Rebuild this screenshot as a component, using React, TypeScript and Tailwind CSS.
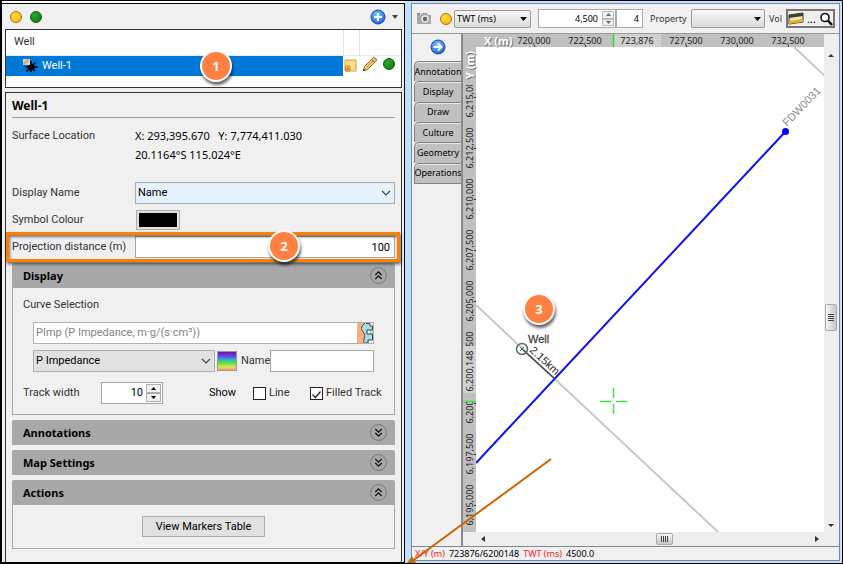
import React, { useState } from 'react'

type SectionProps = {
    title: string
    open?: boolean
    children?: React.ReactNode
}

const xTicks = [
    { x: 71, label: '720,000' },
    { x: 122, label: '722,500' },
    { x: 223, label: '727,500' },
    { x: 274, label: '730,000' },
    { x: 325, label: '732,500' },
]

const yTicks = [
    { y: 63, label: '6,215,000' },
    { y: 114, label: '6,212,500' },
    { y: 165, label: '6,210,000' },
    { y: 216, label: '6,207,500' },
    { y: 267, label: '6,205,000' },
    { y: 318, label: '6,202,500' },
    { y: 369, label: '6,200,000' },
    { y: 420, label: '6,197,500' },
    { y: 471, label: '6,195,000' },
]

const tabs = ['Annotation', 'Display', 'Draw', 'Culture', 'Geometry', 'Operations']

const Dot = ({ color }: { color: 'yellow' | 'green' }) => (
    <span
        className={`block w-3 h-3 rounded-full border shrink-0 ${color === 'yellow'
            ? 'bg-[radial-gradient(circle_at_35%_35%,#ffe040,#ffb000)] border-[#b06a10]'
            : 'bg-[radial-gradient(circle_at_35%_35%,#30a830,#007800)] border-[#1c5a1c]'
            }`}
    />
)

const Badge = ({ n, className }: { n: number; className: string }) => (
    <span
        className={`absolute z-10 flex items-center justify-center w-8 h-8 rounded-full border-2 border-white bg-[#ff8040] text-white font-['Noto_Sans',sans-serif] text-[13px] font-bold shadow-[1px_3px_3px_rgba(0,0,0,0.6)] ${className}`}
    >
        {n}
    </span>
)

const Chevron = () => (
    <svg className="absolute right-1 top-2 pointer-events-none" width="10" height="6" viewBox="0 0 10 6">
        <path d="M1 1l4 4 4-4" fill="none" stroke="#444" strokeWidth="1.2" />
    </svg>
)

const BlueCircle = ({ children }: { children: React.ReactNode }) => (
    <svg width="16" height="16" viewBox="0 0 16 16">
        <defs>
            <radialGradient id="blueball" cx="0.45" cy="0.35" r="0.7">
                <stop offset="0" stopColor="#8cc4ff" />
                <stop offset="0.6" stopColor="#3f8af0" />
                <stop offset="1" stopColor="#1d4fc0" />
            </radialGradient>
        </defs>
        <circle cx="8" cy="8" r="7" fill="url(#blueball)" stroke="#1c49a8" />
        {children}
    </svg>
)

const Section = ({ title, open = false, children }: SectionProps) => (
    <section>
        <h2 className="flex items-center justify-between h-[25px] pl-[11px] pr-2 rounded-t-[2px] bg-[#a8a8a8] font-['Noto_Sans',sans-serif] font-bold text-black">
            {title}
            <button type="button" aria-label={`Toggle ${title}`}>
                <svg width="17" height="17" viewBox="0 0 17 17" fill="none">
                    <circle cx="8.5" cy="8.5" r="7.9" stroke="#777" />
                    {open
                        ? <path d="M5.3 8L8.5 4.8 11.7 8M5.3 12L8.5 8.8 11.7 12" stroke="#111" strokeWidth="1.3" />
                        : <path d="M5.3 5L8.5 8.2 11.7 5M5.3 9L8.5 12.2 11.7 9" stroke="#111" strokeWidth="1.3" />}
                </svg>
            </button>
        </h2>
        {open && <div className="border border-t-0 border-[#a8a8a8]">{children}</div>}
    </section>
)

const Check = ({ id, label, defaultChecked = false }: { id: string; label: string; defaultChecked?: boolean }) => {
    const [on, setOn] = useState(defaultChecked)
    return (
        <span className="relative flex items-center gap-[3px]">
            <input
                id={id}
                type="checkbox"
                checked={on}
                onChange={() => setOn(!on)}
                className="appearance-none w-[13px] h-[13px] border border-[#222] bg-white"
            />
            {on && (
                <svg className="absolute left-0 top-0.5 pointer-events-none" width="13" height="13" viewBox="0 0 13 13">
                    <path d="M2.5 6.5l3 3 5-6" fill="none" stroke="#222" strokeWidth="1.3" />
                </svg>
            )}
            <label htmlFor={id}>{label}</label>
        </span>
    )
}

const WellTree = () => (
    <div className="relative h-[59px] border border-[#333] bg-white">
        <table className="w-full border-collapse table-fixed">
            <colgroup>
                <col />
                <col className="w-4" />
                <col className="w-[42px]" />
            </colgroup>
            <tbody>
                <tr className="h-[25px] border-b border-[#e8e8e8]">
                    <td className="pl-2">Well</td>
                    <td className="border-x border-[#e4e4e4]" />
                    <td />
                </tr>
                <tr className="h-[21px]">
                    <td className="bg-[#0078d7] text-white">
                        <span className="flex items-center gap-1 pl-4">
                            <svg width="16" height="16" viewBox="0 0 16 16">
                                <path d="M9 3v11M3.5 9h12M5 5l8 8M13.5 4.5L4.5 13.5" stroke="#000" strokeWidth="1.4" />
                                <circle cx="9" cy="9" r="3.6" />
                                <path d="M1 1h7v6H1z" fill="#c5d5dc" />
                                <path d="M2 6l4-4" stroke="#e0a040" strokeWidth="2" />
                            </svg>
                            Well-1
                        </span>
                    </td>
                    <td>
                        <svg className="ml-px" width="13" height="13" viewBox="0 0 13 13">
                            <path d="M1 1h11v11H1z" fill="#ffe08a" stroke="#e09a2c" />
                            <path d="M1.5 7H6v5H1.5z" fill="#f7c95c" stroke="#d08a24" />
                            <path d="M3 9l2 2M3 11V9h2" stroke="#b87418" fill="none" />
                        </svg>
                    </td>
                    <td className="align-top">
                        <span className="flex items-center gap-[5px] pl-[3px]">
                            <svg width="16" height="16" viewBox="0 0 16 16">
                                <path d="M1.5 14.5l1-4L11 2l3 3-8.5 8.5z" fill="#f8cf6b" stroke="#8a6420" />
                                <path d="M9.5 3.5l3 3L14.8 4 12 1.2z" fill="#f3b9a0" stroke="#8a6420" />
                                <path d="M4 12l7-7" stroke="#c98f2c" />
                                <path d="M1 15l.8-2.3 1.6 1.5z" fill="#222" />
                            </svg>
                            <Dot color="green" />
                        </span>
                    </td>
                </tr>
            </tbody>
        </table>
        <Badge n={1} className="left-[194px] top-5" />
    </div>
)

const WellProperties = () => (
    <div className="flex-1 mt-1 px-[6px] border border-b-0 border-[#333]">
        <h1 className="h-[25px] leading-[25px] border-b border-[#a0a0a0] font-['Noto_Sans',sans-serif] text-[12px] font-bold text-black">Well-1</h1>
        <div className="grid grid-cols-[123px_1fr] mt-2 leading-[19px]">
            <span>Surface Location</span>
            <span className="text-black font-['Noto_Sans',sans-serif]">
                X: 293,395.670&nbsp;&nbsp; Y: 7,774,411.030
                <br />
                20.1164°S 115.024°E
            </span>
        </div>
        <div className="grid grid-cols-[123px_1fr] items-center gap-y-[6px] mt-[18px]">
            <label htmlFor="displayName">Display Name</label>
            <span className="relative">
                <select id="displayName" className="block appearance-none w-full h-[22px] px-0.5 border border-[#a5acb5] bg-[#e5f1fb] text-black">
                    <option>Name</option>
                </select>
                <Chevron />
            </span>
            <span>Symbol Colour</span>
            <button type="button" aria-label="Symbol Colour" className="w-11 h-5 ml-px p-0.5 border border-[#adadad] bg-[#e1e1e1]">
                <span className="block h-full bg-black" />
            </button>
        </div>
        <div className="relative grid grid-cols-[123px_1fr] items-center mt-[6px]">
            <label htmlFor="projection">Projection distance (m)</label>
            <input id="projection" defaultValue="100" className="h-[22px] w-full px-1 border border-[#a5a5a5] bg-white text-right text-black" />
            <span className="absolute -left-[6px] -right-[5px] -inset-y-1 border-[3px] border-[#ff8000] shadow-[1px_2px_3px_rgba(0,0,0,0.6),inset_1px_2px_3px_rgba(0,0,0,0.5)] pointer-events-none" />
            <Badge n={2} className="left-64 -top-[6px]" />
        </div>
        <div className="flex flex-col gap-[5px] mt-[5px]">
            <Section title="Display" open>
                <div className="pl-[10px] pt-[9px] pb-[10px]">
                    <div className="leading-4">Curve Selection</div>
                    <div className="ml-[10px] mr-5 mt-[9px] flex h-[22px] border border-[#b0b0b0] bg-white">
                        <input
                            aria-label="Curve Selection"
                            defaultValue="PImp (P Impedance, m·g/(s·cm³))"
                            className="flex-1 min-w-0 px-0.5 text-[#838383]"
                        />
                        <svg width="16" height="20" viewBox="0 0 16 20">
                            <path d="M0 0h16v20H0z" fill="#ffad7a" />
                            <path d="M7 0C3 4 4 7 7 10c2 3-1 7 0 10h9V0z" fill="#a6dbe8" />
                            <path d="M13 0h3v3h-3zM10.500 7H13v4h-2.500zM12 17h4v3h-4z" fill="#f0f0f0" />
                            <path d="M8 0C3 4 4 7 7 10c2 3-1 7 0 10M9 .5h4v2.500h2.500v4H10v4h5.500v6H11v3H8" fill="none" stroke="#444" />
                        </svg>
                    </div>
                    <div className="ml-[10px] mr-5 mt-[6px] flex items-center">
                        <span className="relative w-[182px]">
                            <select aria-label="Curve type" className="block appearance-none w-full h-[22px] px-0.5 border border-[#adadad] bg-[#e1e1e1] text-black">
                                <option>P Impedance</option>
                            </select>
                            <Chevron />
                        </span>
                        <button
                            type="button"
                            aria-label="Colour map"
                            className="w-5 h-5 ml-0.5 border border-[#999] bg-[linear-gradient(#7a0aa0,#5a50f0_25%,#30c0b0_45%,#60e040_62%,#e0e060_82%,#ffa060)]"
                        />
                        <label htmlFor="curveName" className="w-[33px] pl-1">Name</label>
                        <input id="curveName" className="flex-1 min-w-0 h-[22px] border border-[#a5a5a5] bg-white px-0.5" />
                    </div>
                    <div className="mt-[10px] flex items-center">
                        <label htmlFor="trackWidth" className="w-[78px]">Track width</label>
                        <span className="flex w-[62px] h-[22px] p-px border border-[#a5a5a5] bg-white">
                            <input id="trackWidth" defaultValue="10" className="flex-1 min-w-0 pr-[3px] text-right text-black" />
                            <span className="flex flex-col w-[15px]">
                                <button type="button" aria-label="Increase" className="flex-1 flex items-center justify-center border border-[#adadad] bg-[#f0f0f0]">
                                    <svg width="5" height="3"><path d="M0 3L2.5 0 5 3z" /></svg>
                                </button>
                                <button type="button" aria-label="Decrease" className="flex-1 flex items-center justify-center border border-[#adadad] bg-[#f0f0f0]">
                                    <svg width="5" height="3"><path d="M0 0l2.5 3L5 0z" /></svg>
                                </button>
                            </span>
                        </span>
                        <span className="w-[90px] pl-[46px] text-black">Show</span>
                        <span className="w-[57px]"><Check id="line" label="Line" /></span>
                        <Check id="filled" label="Filled Track" defaultChecked />
                    </div>
                </div>
            </Section>
            <Section title="Annotations" />
            <Section title="Map Settings" />
            <Section title="Actions" open>
                <div className="flex justify-center pt-[11px] pb-[11px]">
                    <button type="button" className="w-[123px] h-[21px] border border-[#adadad] bg-[#e1e1e1] text-black">
                        View Markers Table
                    </button>
                </div>
            </Section>
        </div>
    </div>
)

const MapToolbar = () => (
    <div className="flex items-center h-[30px] border-b border-[#9a9a9a] pl-1 pr-1">
        <svg width="16" height="14" viewBox="0 0 16 14">
            <path d="M1 3h4l1-2h5l1 2h3v9H1z" fill="#a5a5a5" />
            <path d="M1 1h3v2H1z" fill="#8a8a8a" />
            <circle cx="9" cy="7" r="3.8" fill="#e8e8e8" />
            <circle cx="9" cy="7" r="2.2" fill="#666" />
        </svg>
        <span className="ml-2"><Dot color="yellow" /></span>
        <span className="relative ml-[2px] w-[77px]">
            <select aria-label="Domain" className="block appearance-none w-full h-[18px] px-0.5 rounded-[2px] border border-[#999] bg-gradient-to-b from-[#f6f6f6] to-[#dcdcdc] text-black">
                <option>TWT (ms)</option>
            </select>
            <svg className="absolute right-1 top-[7px] pointer-events-none" width="7" height="4"><path d="M0 0h7L3.5 4z" /></svg>
        </span>
        <span className="flex ml-[7px] w-[78px] h-[19px] border border-[#aaa] bg-white">
            <input aria-label="Time" defaultValue="4,500" className="flex-1 min-w-0 pr-[3px] text-right text-black" />
            <span className="flex flex-col w-[14px] p-px">
                <button type="button" aria-label="Time up" className="flex-1 flex items-center justify-center border border-[#bbb] bg-[#f0f0f0]">
                    <svg width="5" height="3"><path d="M0 3L2.5 0 5 3z" fill="#5068a0" /></svg>
                </button>
                <button type="button" aria-label="Time down" className="flex-1 flex items-center justify-center border border-[#bbb] bg-[#f0f0f0]">
                    <svg width="5" height="3"><path d="M0 0l2.5 3L5 0z" fill="#5068a0" /></svg>
                </button>
            </span>
        </span>
        <input aria-label="Step" defaultValue="4" className="w-[27px] h-[19px] pr-[3px] border border-[#aaa] bg-white text-right text-black" />
        <label htmlFor="property" className="ml-[7px] w-[41px]">Property</label>
        <span className="relative flex-1 min-w-0">
            <select id="property" className="block appearance-none w-full h-[19px] rounded-[2px] border border-[#999] bg-gradient-to-b from-[#f6f6f6] to-[#dcdcdc]">
                <option></option>
            </select>
            <svg className="absolute right-1 top-[8px] pointer-events-none" width="7" height="4"><path d="M0 0h7L3.5 4z" /></svg>
        </span>
        <span className="ml-1 w-[17px]">Vol</span>
        <button type="button" aria-label="Select volume" className="flex items-center justify-between w-[49px] h-[19px] border-2 border-[#777] bg-[#eee] text-black">
            <svg width="16" height="13" viewBox="0 0 16 13">
                <path d="M1 3l14-2v9L1 12z" fill="#f2e6c0" stroke="#333" />
                <path d="M1 3l14-2v3L1 6z" fill="#4a3a20" />
                <path d="M1 9l14-2v3L1 12z" fill="#e8b020" />
            </svg>
            <span className="text-[11px]">...</span>
            <svg width="14" height="14" viewBox="0 0 14 14">
                <circle cx="6" cy="5.5" r="4" fill="#fff" stroke="#111" strokeWidth="1.6" />
                <path d="M9 8.5l4 4.5" stroke="#111" strokeWidth="2.6" />
            </svg>
        </button>
    </div>
)

const Plot = () => (
    <svg className="flex-1 min-w-0 bg-white" fontSize="9" fill="#222">
        {/* survey lines */}
        <g fill="none" strokeWidth="2">
            <path d="M331 13l31 29M13 271l242 227" stroke="#c8c8c8" />
            <path d="M322.5 97.5L13 429" stroke="#1010f0" />
        </g>
        <circle cx="322.5" cy="97.5" r="3.5" fill="#0000ff" />
        <text transform="translate(324 93) rotate(-46)" fontSize="11" fill="#8a8a8a" fontFamily="Liberation Sans, sans-serif">FDW0031</text>

        {/* well and its projection */}
        <path d="M59 315l33 30" stroke="#444" strokeWidth="1.5" />
        <circle cx="59" cy="315" r="5.5" fill="none" stroke="#666" strokeWidth="1.5" />
        <path d="M57 317l4-4M57 313l4 4" stroke="#257a7a" />
        <text x="65" y="309" fontSize="11" fill="#444" stroke="#444" strokeWidth="0.3" fontFamily="Liberation Sans, sans-serif">Well</text>
        <text transform="translate(66 317) rotate(43)" fontSize="11" fontFamily="Liberation Sans, sans-serif">2.15km</text>

        {/* cursor */}
        <path d="M137 367.5h11M153 367.5h11M150.5 354v10M150.5 370v10" stroke="#48e048" strokeWidth="1.5" />

        {/* axes */}
        <rect width="100%" height="13" fill="#c0c0c0" />
        <rect width="13" height="100%" fill="#c0c0c0" />
        {yTicks.map((t) => (
            <g key={t.label}>
                <text transform={`translate(10 ${t.y}) rotate(-90)`} textAnchor="middle">{t.label}</text>
                <path d={`M11 ${t.y}.5h2`} stroke="#333" />
            </g>
        ))}
        <rect width="13" height="51" fill="#c0c0c0" />
        <rect y="359" width="13" height="9" fill="#c0c0c0" />
        <rect y="312" width="13" height="47" fill="#d0d0d0" />
        <text transform="translate(10 337) rotate(-90)" textAnchor="middle">6,200,148</text>
        <path d="M0 367.5h13" stroke="#48e048" strokeWidth="1.5" />
        {xTicks.map((t) => (
            <g key={t.label}>
                <text x={t.x} y="10" textAnchor="middle">{t.label}</text>
                <path d={`M${t.x}.5 11v2`} stroke="#333" />
            </g>
        ))}
        <rect x="150" width="48" height="13" fill="#d0d0d0" />
        <text x="174" y="10" textAnchor="middle">723,876</text>
        <path d="M150.5 0v13" stroke="#20e020" strokeWidth="1.5" />
        <g fontSize="11" fontWeight="bold" fill="#777">
            <text x="22" y="12">X (m)</text>
            <text x="21" y="11" fill="#fff">X (m)</text>
            <text transform="translate(12 46) rotate(-90)">Y (m)</text>
            <text transform="translate(11 45) rotate(-90)" fill="#fff">Y (m)</text>
        </g>
    </svg>
)

const MapView = () => (
    <div className="flex flex-1 border-b border-[#808890]">
        <div className="w-[49px] pl-0.5">
            <button type="button" aria-label="Next" className="block mx-auto mt-[5px]">
                <BlueCircle>
                    <path d="M3.5 8h8M8 4.5L11.5 8 8 11.5" fill="none" stroke="#fff" strokeWidth="2" />
                </BlueCircle>
            </button>
            <div className="flex flex-col h-[123px] mt-[6px]">
                {tabs.map((tab) => (
                    <button
                        key={tab}
                        type="button"
                        className="flex flex-1 items-center justify-center rounded-tl-[5px] border-l border-t border-[#808080] last:border-b bg-[#c0c0c0] text-black shadow-[inset_0_1px_#e8e8e8]"
                    >
                        {tab}
                    </button>
                ))}
            </div>
        </div>
        <div className="relative flex flex-1 flex-col min-w-0 border-l-2 border-[#8a8a90]">
            <div className="flex flex-1">
                <Plot />
                <div className="flex flex-col items-center justify-between w-[15px] pt-[19px] pb-1 pr-0.5 bg-[#eee]">
                    <svg width="6" height="4"><path d="M0 4l3-3 3 3z" fill="#333" /></svg>
                    <span className="flex flex-col items-center justify-center gap-px w-3 h-[27px] mt-[54px] rounded-[2px] border border-[#aaa] bg-gradient-to-r from-[#f5f5f5] to-[#c8c8c8]">
                        {[0, 1, 2, 3].map((i) => <span key={i} className="w-1.5 h-px bg-[#444]" />)}
                    </span>
                    <svg width="6" height="4"><path d="M0 0l3 3 3-3z" fill="#333" /></svg>
                </div>
            </div>
            <div className="flex items-center justify-between h-[14px] pl-[18px] pr-5 bg-[#eee]">
                <svg width="4" height="6"><path d="M4 0L0 3l4 3z" fill="#333" /></svg>
                <span className="flex items-center justify-center gap-px w-[17px] h-3 ml-7 rounded-[2px] border border-[#aaa] bg-gradient-to-b from-[#f5f5f5] to-[#c8c8c8]">
                    {[0, 1, 2, 3].map((i) => <span key={i} className="h-1.5 w-px bg-[#444]" />)}
                </span>
                <svg width="4" height="6"><path d="M0 0l4 3-4 3z" fill="#333" /></svg>
            </div>
            <Badge n={3} className="left-[60px] top-[259px]" />
        </div>
    </div>
)

const App = () => {
    return (
        <div className="grid grid-cols-[405fr_438fr] min-h-screen border-b border-black bg-white text-[#333]">
            {/* Well settings */}
            <div className="flex flex-col min-w-0 border-t border-l-2 border-black pt-0.5 font-['Roboto','Noto_Sans',sans-serif] text-[11px] leading-[14px]">
                <div className="flex flex-1 flex-col pl-[3px] pr-0.5 border-t border-r border-b border-black bg-[#f0f0f0]">
                    <div className="flex items-center gap-2 h-[25px] pl-[5px] pr-1">
                        <Dot color="yellow" />
                        <Dot color="green" />
                        <button type="button" aria-label="Add" className="flex items-center gap-[6px] ml-auto">
                            <BlueCircle>
                                <path d="M8 4v8M4 8h8" stroke="#fff" strokeWidth="2" />
                            </BlueCircle>
                            <svg width="6" height="4"><path d="M0 0h6L3 4z" fill="#444" /></svg>
                        </button>
                    </div>
                    <WellTree />
                    <WellProperties />
                </div>
            </div>

            {/* Map window */}
            <div className="relative flex flex-col min-w-0 border-t border-r border-black bg-[#bfdfff] pt-0.5 pl-[6px] pr-0.5 pb-0.5 font-['Noto_Sans','Open_Sans',sans-serif] text-[9px] leading-[14px]">
                <div className="flex flex-1 flex-col border border-[#7a8798] bg-[#f0f0f0]">
                    <MapToolbar />
                    <MapView />
                    <div className="flex items-center gap-1 h-[13px] pl-[3px] text-black">
                        <span className="text-[#ff2020]">X/Y (m)</span>
                        <span>723876/6200148</span>
                        <span className="text-[#ff2020]">TWT (ms)</span>
                        <span>4500.0</span>
                    </div>
                </div>
                <svg className="absolute left-0 bottom-0 pointer-events-none" width="150" height="110" viewBox="0 0 150 110">
                    <path d="M6 109L146 6" stroke="#cc6600" strokeWidth="2" />
                    <path d="M2 110l5-7 4 7z" fill="#cc6600" />
                </svg>
            </div>
        </div>
    )
}

export default App
